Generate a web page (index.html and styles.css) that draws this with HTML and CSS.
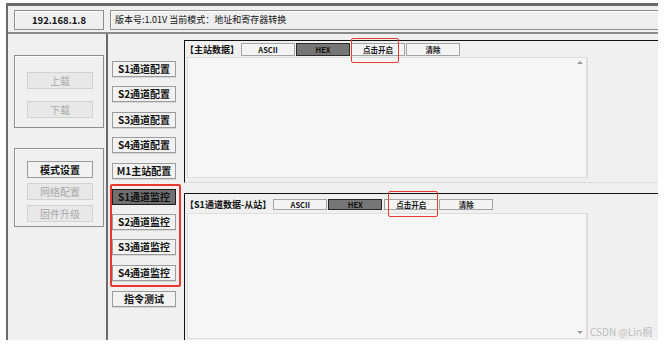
FILE: index.html
```html
<!DOCTYPE html>
<html lang="zh-CN">
<head>
    <meta charset="UTF-8">
    <meta name="viewport" content="width=device-width, initial-scale=1.0">
    <title>通道监控</title>
    <link rel="stylesheet" href="styles.css">
</head>
<body>
    <div class="app">
        <header class="topbar">
            <div class="ip-box">192.168.1.8</div>
            <div class="version-box">版本号:1.01V 当前模式：地址和寄存器转换</div>
        </header>

        <div class="main">
            <aside class="side">
                <div class="group group-load">
                    <button class="btn btn-side" disabled>上载</button>
                    <button class="btn btn-side" disabled>下载</button>
                </div>
                <div class="group group-mode">
                    <button class="btn btn-side">模式设置</button>
                    <button class="btn btn-side" disabled>网络配置</button>
                    <button class="btn btn-side" disabled>固件升级</button>
                </div>
            </aside>

            <nav class="nav">
                <button class="btn btn-nav">S1通道配置</button>
                <button class="btn btn-nav">S2通道配置</button>
                <button class="btn btn-nav">S3通道配置</button>
                <button class="btn btn-nav">S4通道配置</button>
                <button class="btn btn-nav">M1主站配置</button>
                <div class="mark-group">
                    <button class="btn btn-nav active">S1通道监控</button>
                    <button class="btn btn-nav">S2通道监控</button>
                    <button class="btn btn-nav">S3通道监控</button>
                    <button class="btn btn-nav">S4通道监控</button>
                </div>
                <button class="btn btn-nav">指令测试</button>
            </nav>

            <section class="work">
                <div class="panel panel-master">
                    <div class="panel-head">
                        <span class="panel-title">【主站数据】</span>
                        <button class="btn btn-tab">ASCII</button>
                        <button class="btn btn-tab active">HEX</button>
                        <button class="btn btn-tab mark mark-master">点击开启</button>
                        <button class="btn btn-tab">清除</button>
                    </div>
                    <div class="data-box"><span class="arrow arrow-up"></span></div>
                </div>

                <div class="panel panel-slave">
                    <div class="panel-head">
                        <span class="panel-title">【S1通道数据-从站】</span>
                        <button class="btn btn-tab">ASCII</button>
                        <button class="btn btn-tab active">HEX</button>
                        <button class="btn btn-tab mark mark-slave">点击开启</button>
                        <button class="btn btn-tab">清除</button>
                    </div>
                    <div class="data-box"><span class="arrow arrow-down"></span></div>
                </div>
            </section>
        </div>
    </div>

    <div class="watermark">CSDN @Lin桐</div>
</body>
</html>
```

FILE: styles.css
```css
* {
    margin: 0;
    padding: 0;
    box-sizing: border-box;
}

body {
    background: #fff;
    font-family: "Noto Sans CJK SC", "Noto Sans", sans-serif;
    color: #111;
    position: relative;
    height: 346px;
    overflow: hidden;
}

.app {
    margin: 3px 0 0 6px;
    width: 652px;
    height: 337px;
    background: #f0f0f0;
    border-top: 3px solid #6b6b6b;
    border-left: 2px solid #6b6b6b;
    display: flex;
    flex-direction: column;
}

/* Top bar */
.topbar {
    height: 28px;
    padding: 4px 0 0 6px;
    display: flex;
    gap: 6px;
    border-bottom: 2px solid #8a8a8a;
}

.ip-box,
.version-box {
    height: 20px;
    border: 1px solid #8e8e8e;
    box-shadow: inset 1px 1px 0 #fdfdfd;
    background: #efefef;
    font-size: 9.5px;
    line-height: 18px;
}

.ip-box {
    width: 90px;
    text-align: center;
    font-weight: bold;
}

.version-box {
    flex: 1;
    padding-left: 4px;
    border-right: none;
    font-size: 9px;
}

.main {
    flex: 1;
    display: flex;
}

/* Left side */
.side {
    width: 100px;
    border-right: 2px solid #6b6b6b;
    padding: 21px 0 0 6px;
}

.group {
    width: 90px;
    border: 1px solid #8e8e8e;
    box-shadow: inset 1px 1px 0 #fbfbfb;
    display: flex;
    flex-direction: column;
    align-items: flex-start;
    padding-left: 12px;
}

.group-load {
    height: 73px;
    padding-top: 16px;
    gap: 12px;
}

.group-mode {
    height: 79px;
    margin-top: 20px;
    padding-top: 12px;
    gap: 5px;
}

/* Buttons */
.btn {
    font-family: inherit;
    font-weight: bold;
    color: #111;
    background: #f2f2f2;
    border: 1px solid #9c9c9c;
    cursor: default;
}

.btn:disabled {
    color: #a9a9a9;
    background: #e8e8e8;
    border-color: #d2d2d2;
}

.btn-side {
    width: 66px;
    height: 17px;
    font-size: 10px;
    line-height: 15px;
}

.btn-side:disabled {
    font-weight: normal;
}

/* Channel nav */
.nav {
    width: 76px;
    padding: 27px 0 0 4px;
    display: flex;
    flex-direction: column;
    align-items: flex-start;
    gap: 9.4px;
}

.btn-nav {
    width: 64px;
    height: 16px;
    font-size: 10px;
    line-height: 14px;
    box-shadow: 0 1px 0 #d6d6d6;
}

.btn-nav.active {
    background: #6f6f6f;
    border-color: #1e1e1e;
    box-shadow: none;
}

.mark-group {
    margin: -4.4px 0 -5.6px -2px;
    padding: 3px 3px 4px 0;
    border: 2px solid #e8382f;
    border-radius: 2px;
    display: flex;
    flex-direction: column;
    gap: 9.4px;
}

/* Work area */
.work {
    flex: 1;
    padding-top: 6px;
    display: flex;
    flex-direction: column;
    gap: 10px;
}

.panel {
    border-top: 1px solid #111;
    border-left: 1px solid #111;
    border-bottom: 1px solid #dcdcdc;
    display: flex;
    flex-direction: column;
}

.panel-master {
    height: 143px;
}

.panel-slave {
    flex: 1;
    border-bottom: none;
}

.panel-head {
    display: flex;
    align-items: center;
    padding-top: 2px;
}

.panel-slave .panel-head {
    padding-top: 4px;
}

.panel-title {
    font-size: 9px;
    line-height: 13px;
    font-weight: bold;
    margin-right: 2px;
}

.btn-tab {
    width: 54px;
    height: 13px;
    margin-right: 1px;
    font-size: 7.5px;
    line-height: 11px;
    background: #f4f4f4;
    border-color: #a3a3a3;
}

.panel-slave .btn-tab {
    height: 11px;
    line-height: 9px;
}

.btn-tab.active {
    background: #767676;
    border-color: #2a2a2a;
}

.mark {
    position: relative;
}

.mark::after {
    content: "";
    position: absolute;
    z-index: 2;
    border: 1.5px solid #e8382f;
    border-radius: 2px;
}

.mark-master::after {
    left: -1px;
    top: -6px;
    width: 46px;
    height: 23px;
}

.mark-slave::after {
    left: 3px;
    top: -9px;
    width: 48px;
    height: 24px;
}

.panel-slave .mark-slave {
    margin-left: 1px;
}

.data-box {
    position: relative;
    width: 401px;
    margin: 1px 0 0 2px;
    flex: 1;
    background: #f6f6f6;
    border: 1px solid #dedede;
    border-right-width: 2px;
}

.panel-master .data-box {
    margin-bottom: 4px;
}

.panel-slave .data-box {
    margin-top: 2px;
    margin-bottom: 1px;
}

.arrow {
    position: absolute;
    right: 3px;
    width: 0;
    height: 0;
    border-left: 3px solid transparent;
    border-right: 3px solid transparent;
}

.arrow-up {
    top: 3px;
    border-bottom: 3px solid #9a9a9a;
}

.arrow-down {
    bottom: 4px;
    border-top: 3px solid #9a9a9a;
}

.watermark {
    position: absolute;
    left: 590px;
    top: 325px;
    font-size: 10px;
    line-height: 14px;
    color: #bcbcbc;
    white-space: nowrap;
}
```
